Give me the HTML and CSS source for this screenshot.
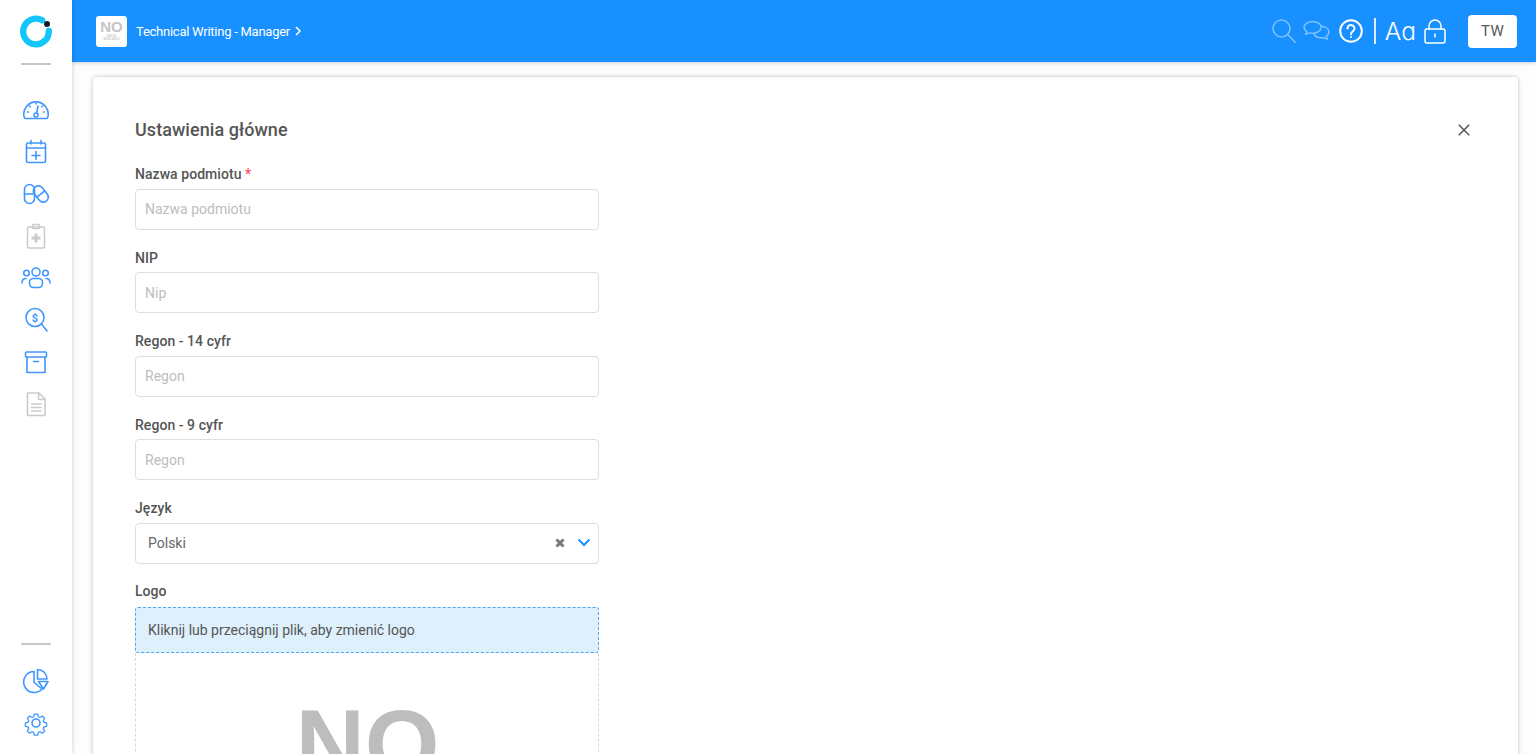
FILE: index.html
```html
<!DOCTYPE html>
<html lang="pl">
<head>
<meta charset="utf-8">
<title>Ustawienia główne</title>
<link rel="stylesheet" href="styles.css">
</head>
<body>
<aside class="sidebar">
  <div class="brand">
    <svg width="36" height="36" viewBox="0 0 36 36"><path d="M24 7.200A12.800 12.800 0 1 0 30.800 18" fill="none" stroke="#12c6fc" stroke-width="6.400" stroke-linecap="round"/><circle cx="29" cy="11" r="3" fill="#0f1a2e"/></svg>
  </div>
  <div class="rule"></div>
  <nav class="nav">
    <a class="nav-item"><svg class="ico" viewBox="0 0 28 28"><path d="M3.500 22.500h21a1.500 1.500 0 0 0 1.200-1 12.200 12.200 0 1 0-23.400 0 1.500 1.500 0 0 0 1.200 1z"/><circle cx="14" cy="19" r="2"/><path d="M14.700 17l1.300-7M14 7v1M7.500 10l.7.7M5.500 16h1M21.500 16h.7M20.500 10l-.7.7"/></svg></a>
    <a class="nav-item"><svg class="ico" viewBox="0 0 28 28"><rect x="4.500" y="5" width="19" height="19.500" rx="1.500"/><path d="M4.500 10h19M9 2.500V6M19 2.500V6M14 13.500v8M10 17.500h8"/></svg></a>
    <a class="nav-item"><svg class="ico" viewBox="0 0 28 28"><rect x="2.500" y="4.500" width="10" height="19" rx="5"/><path d="M2.500 14h10"/><rect x="13.800" y="5" width="10" height="18" rx="5" transform="rotate(-38 18.800 14)"/><path d="M14.860 17.080l7.880-6.160"/></svg></a>
    <a class="nav-item off"><svg class="ico" viewBox="0 0 28 28"><rect x="5.500" y="5" width="17" height="21" rx="1.500"/><rect x="10.500" y="2.500" width="7" height="4" rx="1"/><path class="thick" d="M14 11.500v9M9.500 16h9"/></svg></a>
    <a class="nav-item"><svg class="ico wide" viewBox="0 0 30 28"><circle cx="15" cy="8" r="4"/><rect x="8.500" y="14.500" width="13" height="9" rx="4"/><circle cx="5.500" cy="9" r="2.800"/><circle cx="24.500" cy="9" r="2.800"/><path d="M1 19c0-3 1.500-4.500 4-4.500M29 19c0-3-1.500-4.500-4-4.500"/></svg></a>
    <a class="nav-item"><svg class="ico" viewBox="0 0 28 28"><circle cx="13" cy="11.500" r="9"/><path d="M19.500 18l5.500 7"/><text class="dollar" x="13" y="15.500" text-anchor="middle">$</text></svg></a>
    <a class="nav-item"><svg class="ico" viewBox="0 0 28 28"><rect x="3.500" y="4" width="21" height="5" rx="1"/><path d="M5 9v15.500h18V9M11.500 13.500h5"/></svg></a>
    <a class="nav-item off"><svg class="ico" viewBox="0 0 28 28"><path d="M5.500 3h11.500l6 6v16.500h-17.500zM16.500 3.500v6h6M9.500 14h9.500M9.500 17.500h9.500M9.500 21h9.500"/></svg></a>
  </nav>
  <div class="sidebar-foot">
    <div class="rule"></div>
    <a class="nav-item"><svg class="ico" viewBox="0 0 28 28"><path d="M12 4.500a10.500 10.500 0 1 0 8 17.500l-8-6.500zM15.500 2.500V12h9.500a9.500 9.500 0 0 0-9.500-9.500zM16.500 14.500h9.500l-4.500 7.500z"/></svg></a>
    <a class="nav-item"><svg class="ico" viewBox="0 0 28 28"><circle cx="14" cy="14" r="4"/><path d="M11.800 2.800h4.400l.7 3.400 2 .9 3-1.900 3 3-1.900 3 .9 2 3.400.7v4.200l-3.400.7-.9 2 1.900 3-3 3-3-1.900-2 .9-.7 3.400h-4.400l-.7-3.400-2-.9-3 1.900-3-3 1.900-3-.9-2-3.400-.7v-4.200l3.400-.7.9-2-1.900-3 3-3 3 1.900 2-.9z" transform="translate(2.800 2.800) scale(.8)"/></svg></a>
  </div>
</aside>
<div class="main">
  <header class="topbar">
    <div class="thumb"><span class="thumb-no">NO</span><span class="thumb-sub">IMAGE<br>AVAILABLE</span></div>
    <span class="crumb">Technical Writing - Manager</span>
    <svg class="crumb-arrow" width="8" height="12" viewBox="0 0 8 12"><path d="M2 2l4 4-4 4"/></svg>
    <div class="tools">
      <svg class="tool dim search" width="24" height="24" viewBox="0 0 24 24"><circle cx="9.500" cy="9.500" r="8.500"/><path d="M15.500 15.500l8 8"/></svg>
      <svg class="tool dim chat" width="27" height="22" viewBox="0 0 28 23"><path d="M10 1.500c-5 0-9 2.500-9 6 0 2 1.200 3.500 3 4.600L2.500 15l5-1.500c1 .2 1.700.2 2.500.2 5 0 9-2.700 9-6.200s-4-6-9-6z"/><path d="M19 6.500c4.500.3 8 2.600 8 6 0 2-1.200 3.500-3 4.500l1.500 3-5-1.500c-4 .5-8-1-9.500-4.500"/></svg>
      <svg class="tool help" width="24" height="24" viewBox="0 0 24 24"><circle cx="12" cy="12" r="10.800"/><path d="M8.500 9.500a3.500 3.500 0 1 1 5.500 2.800c-1.300.9-2 1.500-2 3"/><circle class="dot" cx="12" cy="18" r="1"/></svg>
      <span class="divider"></span>
      <span class="aa">Aa</span>
      <svg class="tool" width="22" height="25" viewBox="0 0 22 25"><rect x="1" y="10" width="20" height="14" rx="2"/><path d="M5 10V7a6 6 0 0 1 12 0v3M11 15v3"/></svg>
    </div>
    <button class="avatar">TW</button>
  </header>
  <div class="content">
    <section class="card">
      <div class="card-head">
        <h1 class="title">Ustawienia główne</h1>
        <svg class="close" width="12" height="12" viewBox="0 0 12 12"><path d="M.8.800l10.400 10.400M11.200.800L.8 11.200"/></svg>
      </div>
      <form class="form">
        <div class="field"><label class="label">Nazwa podmiotu <span class="req">*</span></label><input class="input" placeholder="Nazwa podmiotu"></div>
        <div class="field"><label class="label">NIP</label><input class="input" placeholder="Nip"></div>
        <div class="field"><label class="label">Regon - 14 cyfr</label><input class="input" placeholder="Regon"></div>
        <div class="field"><label class="label">Regon - 9 cyfr</label><input class="input" placeholder="Regon"></div>
        <div class="field field-select"><label class="label">Język</label>
          <div class="select"><span class="select-value">Polski</span>
            <svg class="clear" width="10" height="10" viewBox="0 0 10 10"><path d="M1.500 1.500l7 7M8.500 1.500l-7 7"/></svg>
            <svg class="chev" width="14" height="9" viewBox="0 0 14 9"><path d="M1.500 1.500L7 7l5.500-5.500"/></svg>
          </div>
        </div>
        <div class="field"><label class="label">Logo</label>
          <div class="drop">Kliknij lub przeciągnij plik, aby zmienić logo</div>
          <div class="preview"><span class="preview-no">NO</span></div>
        </div>
      </form>
    </section>
  </div>
</div>
</body>
</html>
```
FILE: styles.css
```css
* { box-sizing: border-box; }
html, body { margin: 0; height: 754px; overflow: hidden; }
body { display: flex; font-family: Roboto, "Liberation Sans", sans-serif; color: #555; background: #fdfdfd; }

.sidebar { width: 72px; flex: none; height: 754px; background: #fff; box-shadow: 1px 0 4px rgba(0,0,0,.14); display: flex; flex-direction: column; align-items: center; position: relative; z-index: 2; }
.brand { height: 36px; margin-top: 13px; }
.brand svg { display: block; }
.rule { width: 30px; height: 2px; background: #c8c8c8; margin-top: 14px; }
.nav { margin-top: 24px; display: flex; flex-direction: column; }
.nav-item { display: flex; width: 32px; height: 42px; align-items: center; justify-content: center; }
.ico { width: 28px; height: 28px; flex: none; fill: none; stroke: #4096ff; stroke-width: 1.600; stroke-linejoin: round; stroke-linecap: round; }
.ico.wide { width: 30px; }
.off .ico { stroke: #cbcbcb; }
.ico .thick { stroke-width: 3; stroke-linecap: butt; }
.dollar { font: 700 11px Roboto, sans-serif; fill: #4096ff; stroke: none; }
.sidebar-foot { margin-top: auto; margin-bottom: 10px; display: flex; flex-direction: column; align-items: center; }
.sidebar-foot .rule { margin-bottom: 15px; }

.main { flex: 1; min-width: 0; display: flex; flex-direction: column; }
.topbar { height: 62px; flex: none; background: #1890ff; box-shadow: 0 1px 4px rgba(0,0,0,.2); display: flex; align-items: center; padding: 0 19px 0 24px; position: relative; z-index: 1; }
.thumb { width: 31px; height: 31px; background: #fff; border-radius: 3px; display: flex; flex-direction: column; align-items: center; padding-top: 5px; }
.thumb-no { font: 700 15px/12px "Liberation Sans", sans-serif; color: #c4c4c4; }
.thumb-sub { font: 700 3px/3.500px "Liberation Sans", sans-serif; color: #cfcfcf; text-align: center; margin-top: 2px; }
.crumb { margin-left: 9px; font-size: 13px; color: #fff; letter-spacing: -.25px; }
.crumb-arrow { margin-left: 4px; fill: none; stroke: #fff; stroke-width: 1.500; }
.tools { margin-left: auto; display: flex; align-items: center; }
.tool { flex: none; fill: none; stroke: #fff; stroke-width: 1.500; stroke-linecap: round; stroke-linejoin: round; }
.tool.dim { opacity: .45; }
.search { margin-right: 7px; }
.chat { margin-right: 9px; }
.tool.help { stroke-width: 2; }
.tool .dot { fill: #fff; stroke: none; }
.divider { width: 2px; height: 26px; background: #fff; opacity: .85; margin: 0 9px 0 11px; }
.aa { font: 300 24.500px/30px Inter, sans-serif; font-feature-settings: "cv11"; color: #fff; margin-right: 8px; }
.avatar { width: 49px; height: 33px; margin-left: 22px; border: 0; border-radius: 4px; background: #fff; color: #5a5a5a; font: 400 15px Roboto, sans-serif; letter-spacing: .3px; padding: 0; }

.content { flex: 1; padding: 15px 18px 0 21px; min-height: 0; }
.card { background: #fff; border-radius: 4px; box-shadow: 0 0 4px rgba(0,0,0,.25); padding: 41px 48px 0 42px; height: 900px; }
.card-head { display: flex; align-items: center; justify-content: space-between; height: 24px; margin-bottom: 21px; }
.title { margin: 0; font-size: 18px; font-weight: 500; line-height: 24px; color: #555; letter-spacing: .05px; }
.close { fill: none; stroke: #555; stroke-width: 1.500; }
.form { width: 464px; }
.field { margin-bottom: 16.720px; }
.field-select { margin-bottom: 16.400px; }
.label { display: block; height: 22px; line-height: 22px; margin-bottom: 3.800px; font-size: 14px; font-weight: 500; color: #555; letter-spacing: .05px; }
.req { color: #ff4d6a; }
.input { display: block; width: 100%; height: 41px; border: 1px solid #dedede; border-radius: 4px; padding: 0 9px .5px; font: 400 14px Roboto, sans-serif; outline: none; background: #fff; }
.input::placeholder { color: #bdbdbd; opacity: 1; }
.select { height: 41px; border: 1px solid #dedede; border-radius: 4px; display: flex; align-items: center; padding: 0 7px 1px 12px; font-size: 14px; color: #666; }
.select-value { flex: 1; }
.clear { fill: none; stroke: #777; stroke-width: 3; margin-right: 12px; }
.chev { fill: none; stroke: #1890ff; stroke-width: 2; }
.drop { height: 46.500px; margin-top: 4.400px; line-height: 45px; border: 1px dashed #4aa8f5; border-radius: 3px; background: #ddf0fb; padding-left: 12px; font-size: 14px; color: #555; }
.preview { height: 300px; border: 1px dashed #d9d9d9; border-top: 0; text-align: center; padding-top: 40.500px; padding-left: 1px; }
.preview-no { font: 700 96px/100px "Liberation Sans", sans-serif; color: #bdbdbd; }
```
